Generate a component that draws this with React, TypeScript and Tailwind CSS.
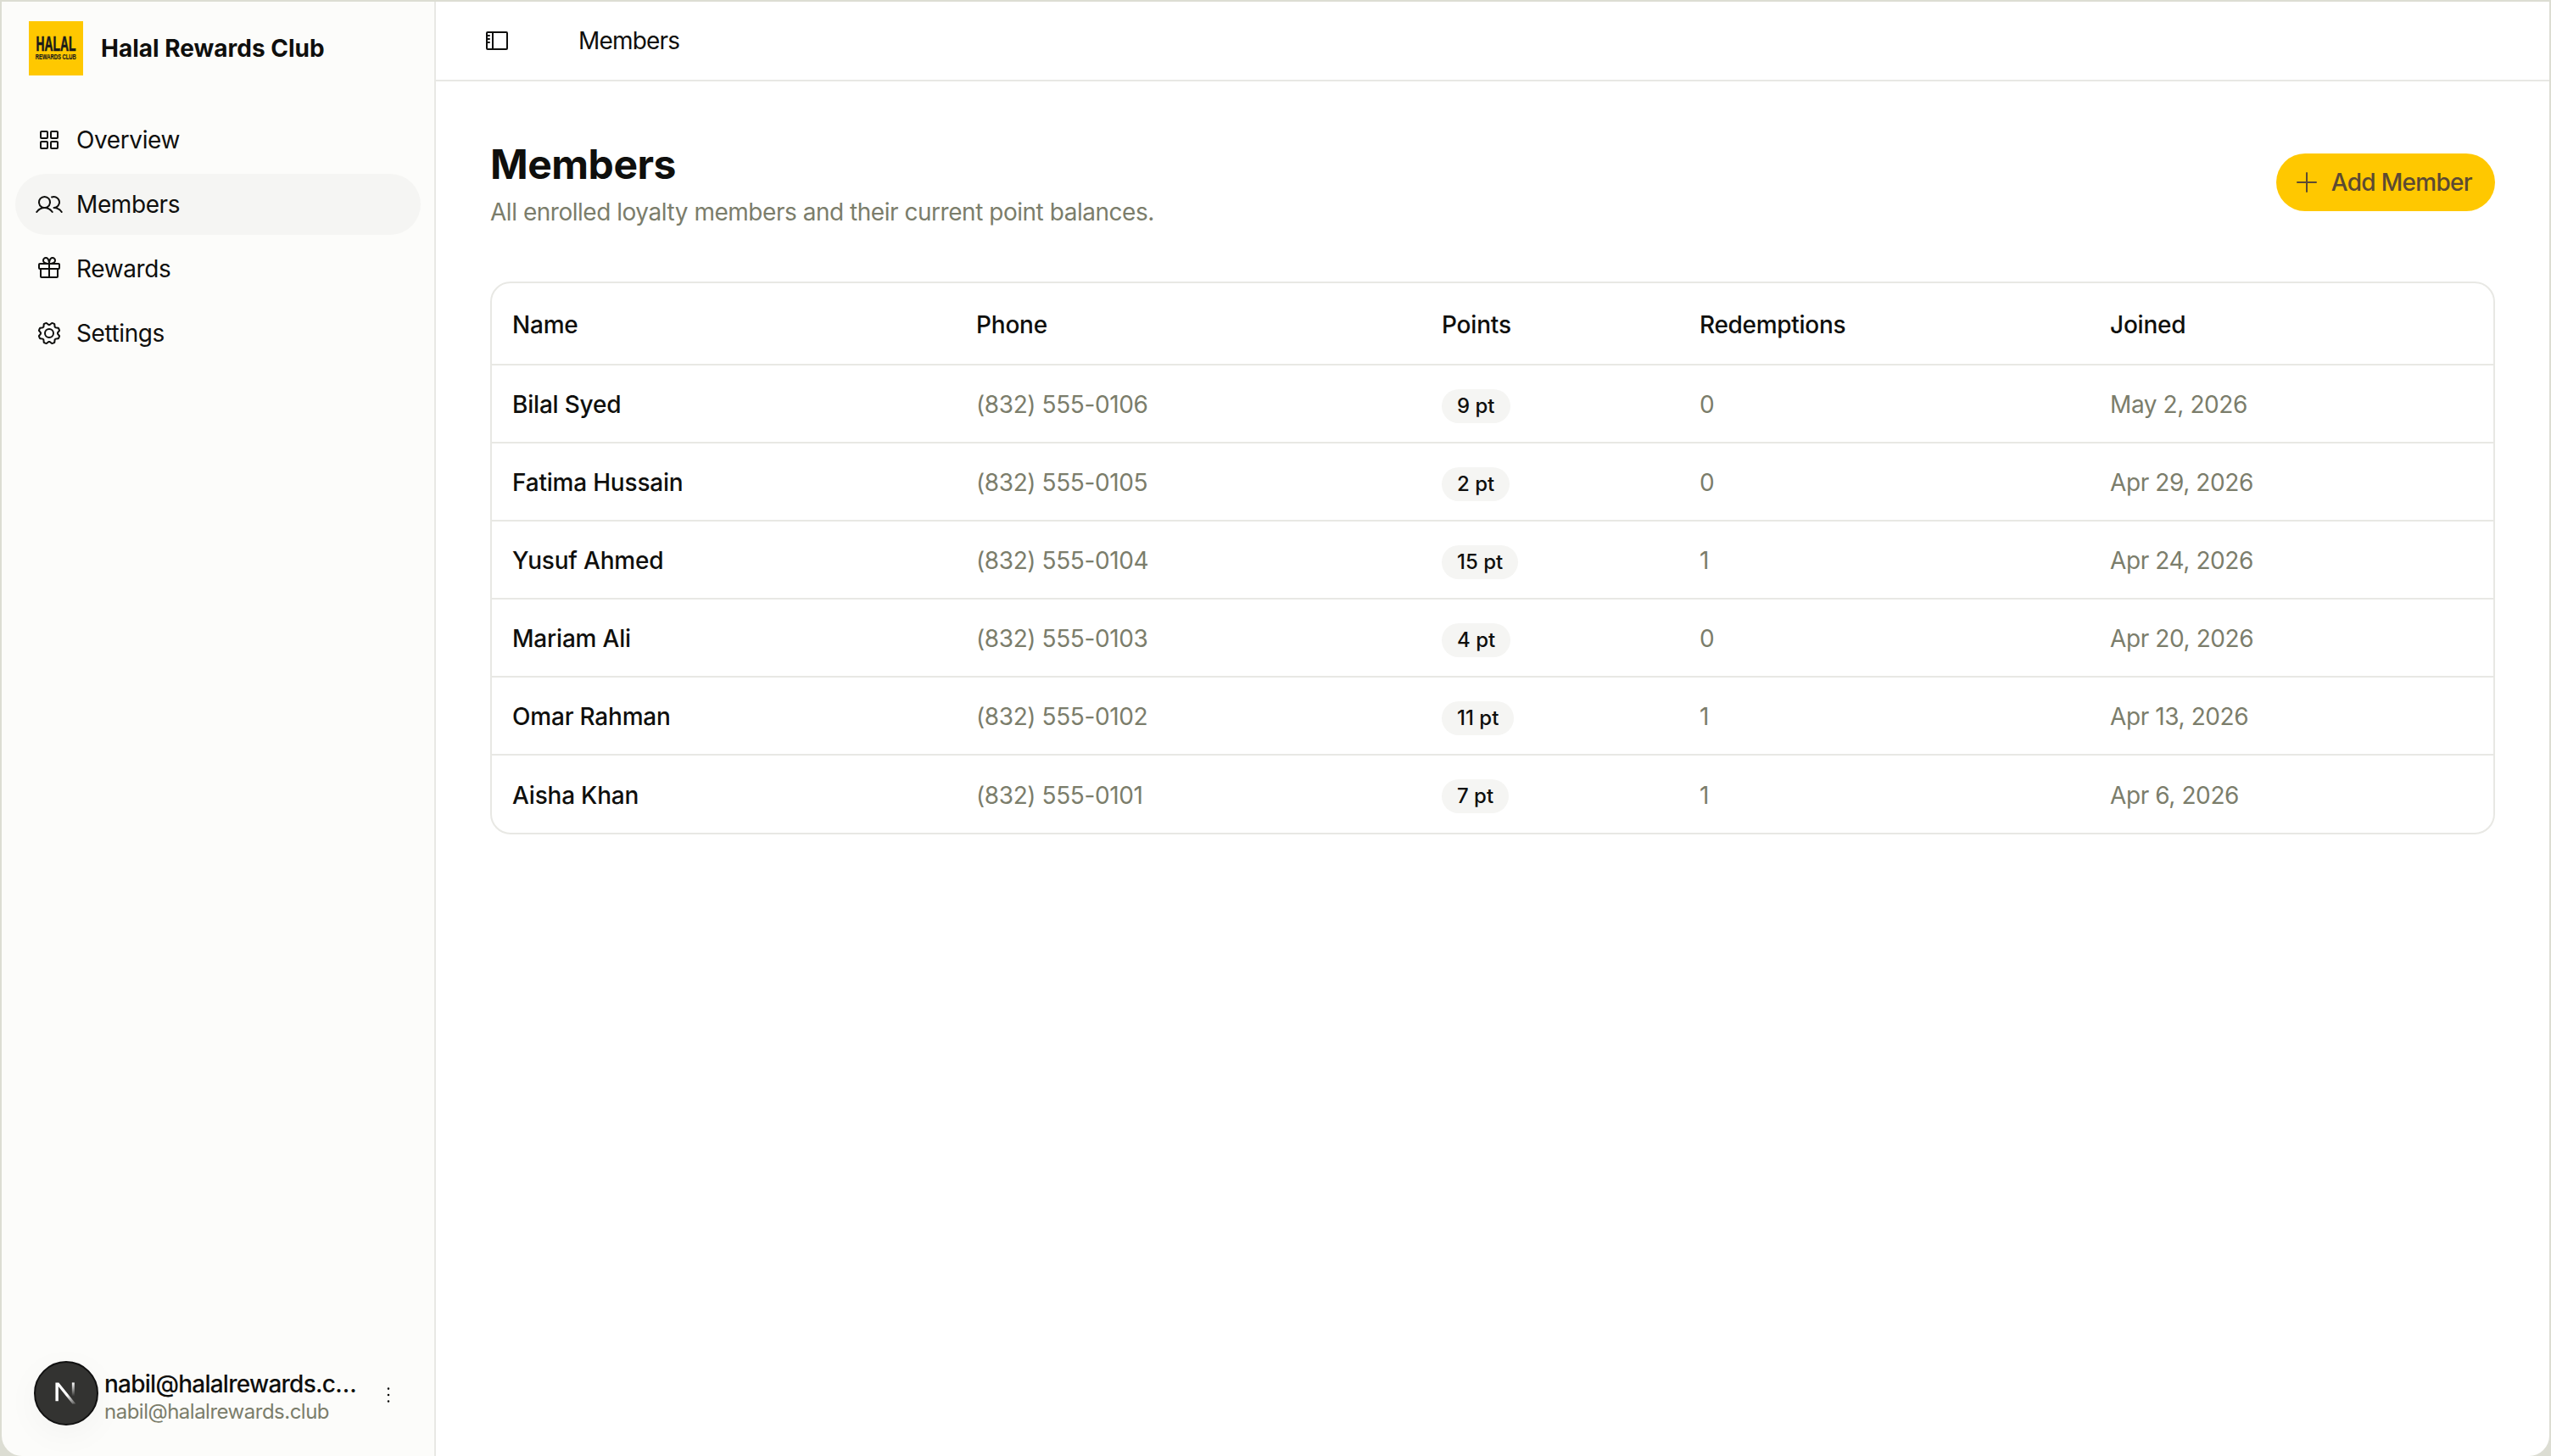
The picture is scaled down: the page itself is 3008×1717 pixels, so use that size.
import React from 'react';
import {PiDotsThreeVertical, PiGear, PiGift, PiPlus, PiSidebar, PiSquaresFour, PiUsers} from 'react-icons/pi';

const navItems = [
    {label: 'Overview', icon: PiSquaresFour},
    {label: 'Members', icon: PiUsers, active: true},
    {label: 'Rewards', icon: PiGift},
    {label: 'Settings', icon: PiGear},
];

const members = [
    {name: 'Bilal Syed', phone: '(832) 555-0106', points: '9 pt', redemptions: 0, joined: 'May 2, 2026'},
    {name: 'Fatima Hussain', phone: '(832) 555-0105', points: '2 pt', redemptions: 0, joined: 'Apr 29, 2026'},
    {name: 'Yusuf Ahmed', phone: '(832) 555-0104', points: '15 pt', redemptions: 1, joined: 'Apr 24, 2026'},
    {name: 'Mariam Ali', phone: '(832) 555-0103', points: '4 pt', redemptions: 0, joined: 'Apr 20, 2026'},
    {name: 'Omar Rahman', phone: '(832) 555-0102', points: '11 pt', redemptions: 1, joined: 'Apr 13, 2026'},
    {name: 'Aisha Khan', phone: '(832) 555-0101', points: '7 pt', redemptions: 1, joined: 'Apr 6, 2026'},
];

function Logo() {
    return (
        <div className="w-16 h-16 bg-[#ffc800] flex flex-col items-center justify-center shrink-0 text-[#1a1a1a] font-['Liberation_Sans',sans-serif] font-bold overflow-hidden">
            <div className="text-[23px] leading-[19px] scale-x-[0.6] whitespace-nowrap [-webkit-text-stroke:0.7px_#1a1a1a]">HALAL</div>
            <div className="text-[9.5px] leading-[9px] scale-x-[0.62] whitespace-nowrap [-webkit-text-stroke:0.2px_#1a1a1a]">REWARDS CLUB</div>
        </div>
    );
}

function Avatar() {
    return (
        <div className="w-[76px] h-[76px] rounded-full bg-[#333331] border-2 border-[#111] flex items-center justify-center shrink-0 shadow-[0_10px_40px_rgba(0,0,0,0.04)]">
            <svg width="32" height="32" viewBox="0 0 28 28" fill="none">
                <defs>
                    <linearGradient id="fadeA" x1="8" y1="4" x2="24" y2="26" gradientUnits="userSpaceOnUse">
                        <stop offset="0.5" stopColor="#fff"/>
                        <stop offset="1" stopColor="#fff" stopOpacity="0.1"/>
                    </linearGradient>
                    <linearGradient id="fadeB" x1="21" y1="3" x2="21" y2="17" gradientUnits="userSpaceOnUse">
                        <stop stopColor="#fff"/>
                        <stop offset="1" stopColor="#fff" stopOpacity="0"/>
                    </linearGradient>
                </defs>
                <path d="M3 3h3.4L24 25h-3.6L6 7v15H3z" fill="url(#fadeA)"/>
                <rect x="20" y="3" width="2.6" height="14" fill="url(#fadeB)"/>
            </svg>
        </div>
    );
}

export default function App() {
    return (
        <div className="w-[3008px] h-[1717px] flex bg-[#dcddd3] pt-[2px] pr-[2px] font-['Inter',sans-serif] text-[#0f0f0d] overflow-hidden">
            <aside className="w-[510px] ml-[2px] h-full bg-[#fcfcfa] rounded-bl-[24px] flex flex-col shrink-0">
                <div className="flex items-center gap-[21px] pl-[32px] pt-[23px]">
                    <Logo/>
                    <span className="text-[28px] font-bold">Halal Rewards Club</span>
                </div>
                <nav className="mt-[40px] px-[16px] flex flex-col gap-[4px]">
                    {navItems.map(item => {
                        const Icon = item.icon;
                        return (
                            <div key={item.label}
                                 className={`h-[72px] rounded-full flex items-center gap-[16px] pl-[24px] text-[28px] tracking-[-0.4px] ${item.active ? 'bg-[#f5f5f3]' : ''}`}>
                                <Icon className="w-[32px] h-[32px]"/>
                                <span>{item.label}</span>
                            </div>
                        );
                    })}
                </nav>
                <div className="mt-auto pb-[36px] pl-[38px] pr-[40px] flex items-center">
                    <Avatar/>
                    <div className="ml-[7px] w-[298px] min-w-0 mt-[8px]">
                        <div className="text-[28px] leading-[36px] font-medium tracking-[-0.75px] truncate">nabil@halalrewards.club</div>
                        <div className="text-[24px] leading-[30px] tracking-[-0.5px] text-[#7b7d6b]">nabil@halalrewards.club</div>
                    </div>
                    <PiDotsThreeVertical className="w-[28px] h-[28px] ml-auto mt-[4px]"/>
                </div>
            </aside>
            <main className="flex-1 min-w-0 h-full bg-white border-l-[2px] border-[#e8e8e4] rounded-br-[24px] flex flex-col">
                <header className="h-[94px] border-b-[2px] border-[#e8e8e4] flex items-center pl-[56px] shrink-0">
                    <PiSidebar className="w-[32px] h-[32px]"/>
                    <span className="ml-[80px] text-[28px] tracking-[-0.8px]">Members</span>
                </header>
                <div className="pl-[64px] pr-[64px] pt-[66px]">
                    <div className="flex items-start justify-between">
                        <div>
                            <h1 className="text-[48px] leading-[64px] font-bold tracking-[-0.5px]">Members</h1>
                            <p className="text-[28px] leading-[40px] text-[#7b7d6b] mt-[4px] tracking-[-0.47px]">All enrolled loyalty members and their current point balances.</p>
                        </div>
                        <button className="h-[68px] mt-[19px] rounded-full bg-[#ffc800] text-[#5c4a32] flex items-center gap-[13px] pl-[20px] pr-[27px] text-[28px] font-medium tracking-[-0.7px]">
                            <PiPlus className="w-[32px] h-[32px]"/>
                            Add Member
                        </button>
                    </div>
                    <div className="mt-[62px] border-[2px] border-[#e8e8e4] rounded-[24px] overflow-hidden">
                        <table className="w-full table-fixed text-[28px] text-left">
                            <thead>
                                <tr className="h-[96px]">
                                    <th className="w-[547px] pl-[24px] pt-[2px] font-medium tracking-[-0.2px]">Name</th>
                                    <th className="w-[549px] pl-[24px] pt-[2px] font-medium tracking-[-0.2px]">Phone</th>
                                    <th className="w-[303px] pl-[24px] pt-[2px] font-medium tracking-[-0.2px]">Points</th>
                                    <th className="w-[485px] pl-[25px] pt-[2px] font-medium tracking-[-0.3px]">Redemptions</th>
                                    <th className="pl-[24px] pt-[2px] font-medium tracking-[-0.2px]">Joined</th>
                                </tr>
                            </thead>
                            <tbody>
                                {members.map(m => (
                                    <tr key={m.name} className="h-[92px] border-t-[2px] border-[#e8e8e4]">
                                        <td className="pl-[24px] pt-[2px] font-medium tracking-[-0.2px]">{m.name}</td>
                                        <td className="pl-[24px] pt-[2px] text-[#7b7d6b] tracking-[-0.4px]">{m.phone}</td>
                                        <td className="pl-[24px] pt-[2px]">
                                            <span className="inline-flex h-[40px] items-center rounded-full bg-[#f5f5f3] px-[18px] text-[24px] font-medium">{m.points}</span>
                                        </td>
                                        <td className="pl-[25px] pt-[2px] text-[#7b7d6b]">{m.redemptions}</td>
                                        <td className="pl-[24px] pt-[2px] text-[#7b7d6b] tracking-[-0.4px]">{m.joined}</td>
                                    </tr>
                                ))}
                            </tbody>
                        </table>
                    </div>
                </div>
            </main>
        </div>
    );
}
